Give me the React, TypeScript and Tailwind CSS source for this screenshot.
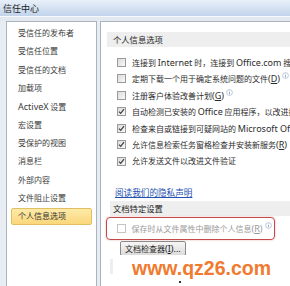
import React from "react";

function L({ children }: { children: React.ReactNode }) {
  return <span className="text-[9px] font-['Noto_Sans',sans-serif]">{children}</span>;
}

function Box({ checked = false, disabled = false }: { checked?: boolean; disabled?: boolean }) {
  return (
    <span
      className={
        "relative inline-block w-[9px] h-[9px] shrink-0 border " +
        (disabled
          ? "border-[#c4c4c4] bg-white"
          : "border-[#9a9a9a] bg-gradient-to-br from-[#dcdcdc] to-[#f8f8f8]")
      }
    >
      {checked && (
        <svg viewBox="0 0 9 9" className="absolute -left-[1px] -top-[1px] w-[9px] h-[9px]">
          <path d="M2 4.6 L3.7 6.4 L7 2.2" fill="none" stroke="#3d3d3d" strokeWidth="1.2" />
        </svg>
      )}
    </span>
  );
}

function Info() {
  return (
    <svg viewBox="0 0 8 8" className="w-[7px] h-[7px] ml-[2px] -mt-[6px] shrink-0">
      <circle cx="4" cy="4" r="3.3" fill="white" stroke="#9fb3cc" strokeWidth="0.8" />
      <path d="M4 3.4 V6" stroke="#7f98ba" strokeWidth="0.9" />
      <circle cx="4" cy="2.2" r="0.5" fill="#7f98ba" />
    </svg>
  );
}

function Row({
  checked = false,
  info = false,
  children,
}: {
  checked?: boolean;
  info?: boolean;
  children: React.ReactNode;
}) {
  return (
    <div className="h-[16.5px] flex items-center pl-[16px] whitespace-nowrap">
      <Box checked={checked} />
      <span className="ml-[6px] leading-none">{children}</span>
      {info && <Info />}
    </div>
  );
}

const items: React.ReactNode[] = [
  "受信任的发布者",
  "受信任位置",
  "受信任的文档",
  "加载项",
  <>
    <L>ActiveX</L> 设置
  </>,
  "宏设置",
  "受保护的视图",
  "消息栏",
  "外部内容",
  "文件阻止设置",
  "个人信息选项",
];

export default function App() {
  return (
    <div className="relative w-[290px] h-[286px] overflow-hidden bg-[#e8edf4] text-[8px] text-[#2c2c2c] font-['Noto_Sans_CJK_SC',sans-serif]">
      <div className="h-[16px] bg-gradient-to-b from-[#e8f0f9] to-[#c2d4eb] flex items-center pl-[3px] text-[9px] leading-none text-[#1e1e1e]">
        信任中心
      </div>
      <div className="h-[1px] bg-[#f5f8fc]" />
      <div className="h-[4px] bg-[#e4e9f0]" />
      <div className="flex h-[265px]">
        <div className="ml-[6px] w-[91px] shrink-0 border border-b-0 border-[#aab4c1] bg-white pt-[2px]">
          {items.map((t, i) => {
            const sel = i === items.length - 1;
            return (
              <div key={i} className="h-[18.33px] flex items-center">
                <div
                  className={
                    "mx-[4px] flex-1 h-[17px] flex items-center pl-[6px] rounded-[2px] border leading-none whitespace-nowrap " +
                    (sel
                      ? "border-[#e2c062] bg-gradient-to-b from-[#fdeaa8] to-[#fad77a] text-[#333]"
                      : "border-transparent text-[#3a3a3a]")
                  }
                >
                  <span>{t}</span>
                </div>
              </div>
            );
          })}
        </div>
        <div className="ml-[3px] flex-1 border-l border-t border-[#aab4c1] bg-white overflow-hidden">
          <div className="mt-[10px] ml-[6px] h-[15px] bg-[#eeeeee] pl-[6px] flex items-center leading-none text-[8.3px] text-[#222]">
            个人信息选项
          </div>
          <div className="mt-[7px]">
            <Row>
              连接到 <L>Internet</L> 时，连接到 <L>Office.com</L> 搜索更新的内容
            </Row>
            <Row info>
              定期下载一个用于确定系统问题的文件<L>(<span className="underline">D</span>)</L>
            </Row>
            <Row info>
              注册客户体验改善计划<L>(<span className="underline">G</span>)</L>
            </Row>
            <Row checked>
              自动检测已安装的 <L>Office</L> 应用程序，以改进搜索结果
            </Row>
            <Row checked>
              检查来自或链接到可疑网站的 <L>Microsoft Office</L> 文档
            </Row>
            <Row checked>
              允许信息检索任务窗格检查并安装新服务<L>(<span className="underline">R</span>)</L>
            </Row>
            <Row checked>允许发送文件以改进文件验证</Row>
          </div>
          <div className="mt-[17px] pl-[14px] h-[12px] flex items-center leading-none">
            <span className="text-[#2450b0] underline text-[8.6px]">阅读我们的隐私声明</span>
          </div>
          <div className="mt-[2px] ml-[9px] h-[15px] bg-[#eeeeee] pl-[3px] flex items-center leading-none text-[8.3px] text-[#222]">
            文档特定设置
          </div>
          <div className="mt-[1px] ml-[5px] w-[169px] h-[23px] border-[1.5px] border-[#c44a4a] rounded-[4px] shadow-[0_0_2px_rgba(200,70,70,0.45)] flex items-center pl-[9.5px] whitespace-nowrap">
            <Box disabled />
            <span className="ml-[6px] leading-none text-[#9a9a9a]">
              保存时从文件属性中删除个人信息<L>(<span className="underline">R</span>)</L>
            </span>
            <Info />
          </div>
          <div className="mt-[1px] ml-[19px] w-[66px] h-[15px] border border-[#8a8a8a] rounded-[2px] bg-gradient-to-b from-[#f6f6f6] to-[#dcdcdc] flex items-center pl-[4px] leading-none whitespace-nowrap text-[#1e1e1e]">
            <span>
              文档检查器<L>(<span className="underline">I</span>)...</L>
            </span>
          </div>
          <div className="mt-[3px] ml-[9px] h-[15px] bg-[#eeeeee]" />
        </div>
      </div>
      <div className="absolute left-[113px] top-[255px] right-0 bottom-0 bg-white">
        <div className="absolute left-[19px] top-[0px] text-[19.5px] leading-[26px] font-bold text-[#f07a2e] font-['Liberation_Sans',Arial,sans-serif] whitespace-nowrap">
          www.qz26.com
        </div>
        <div className="absolute left-[66px] top-[26px] w-[2px] h-[2px] bg-[#333]" />
      </div>
    </div>
  );
}
